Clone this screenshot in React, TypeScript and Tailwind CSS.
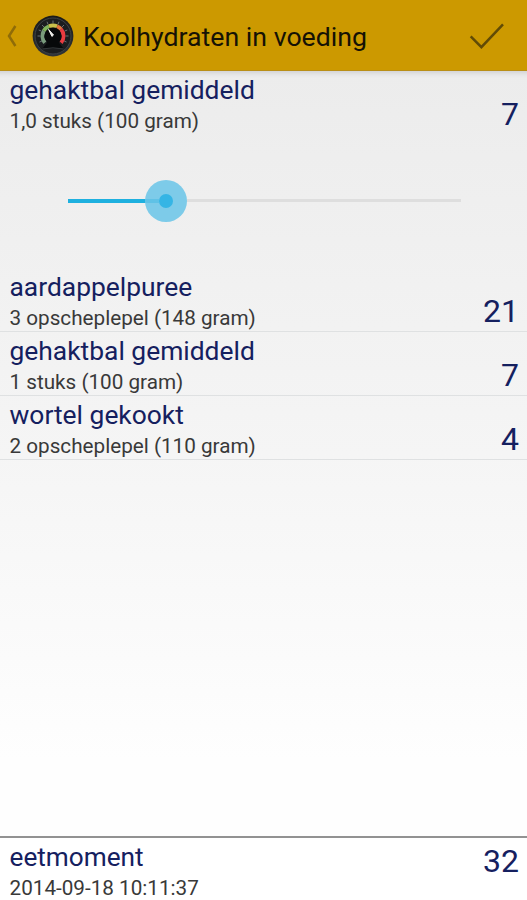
import React from "react";

interface FoodItem {
  name: string;
  portion: string;
  carbs: number;
}

const current: FoodItem = { name: "gehaktbal gemiddeld", portion: "1,0 stuks (100 gram)", carbs: 7 };

const items: FoodItem[] = [
  { name: "aardappelpuree", portion: "3 opscheplepel (148 gram)", carbs: 21 },
  { name: "gehaktbal gemiddeld", portion: "1 stuks (100 gram)", carbs: 7 },
  { name: "wortel gekookt", portion: "2 opscheplepel (110 gram)", carbs: 4 },
];

const GaugeIcon: React.FC = () => (
  <svg width="42" height="42" viewBox="0 0 42 42" className="shrink-0" aria-hidden="true">
    <defs>
      <linearGradient id="rim" x1="0" y1="0" x2="0" y2="1">
        <stop offset="0" stopColor="#1a1a18" />
        <stop offset="1" stopColor="#303438" />
      </linearGradient>
    </defs>
    <circle cx="21" cy="21" r="20.4" fill="url(#rim)" />
    <circle cx="21" cy="21" r="18" fill="#1b1d1f" stroke="#3d4246" strokeWidth="1" />
    {/* Scale ticks */}
    <path
      d="M5.5 21h3M33.5 21h3M21 5.5v3M10 10l2 2M32 10l-2 2M6.7 15l2.6 1M35.3 15l-2.6 1M15 6.7l1 2.6M27 6.7l-1 2.6M7.5 27l2.4-1M34.5 27l-2.4-1"
      stroke="#687073"
      strokeWidth="1"
    />
    {/* Dial */}
    <g fill="none" strokeWidth="4.2">
      <path d="M13 27.7A10.4 10.4 0 0 1 12 15.8" stroke="#799b7c" />
      <path d="M12 15.8A10.4 10.4 0 0 1 17 11.4" stroke="#7fb35c" />
      <path d="M17 11.4A10.4 10.4 0 0 1 25 11.4" stroke="#c9c04b" />
      <path d="M25 11.4A10.4 10.4 0 0 1 29 14.4" stroke="#e2733c" />
      <path d="M29 14.4A10.4 10.4 0 0 1 29 27.7" stroke="#e93b40" />
    </g>
    <path d="M21 12.6a8.6 8.6 0 0 1 5.8 14.9l4.5 5.7H10.7l4.5-5.7A8.6 8.6 0 0 1 21 12.6z" fill="#07090a" />
    <path d="M16.6 14.4l4.9 5.6-1.6 1.4z" fill="#f1f1ed" stroke="#f1f1ed" strokeWidth="1" />
    <path d="M10.5 34q10.5-2.4 21 0" fill="none" stroke="#34383a" strokeWidth="1" />
  </svg>
);

const Header: React.FC = () => (
  <header className="flex h-[71px] shrink-0 items-center border-b border-[#b98e16] bg-[#cc9900] pt-px">
    <svg width="32" height="24" viewBox="0 0 32 24" fill="none" className="shrink-0" aria-hidden="true">
      <path d="M15.4 2L9 12l6.4 10" stroke="#8f6c08" strokeWidth="2.5" />
    </svg>
    <GaugeIcon />
    <h1 className="ml-[9px] grow pt-[3px] text-[26.7px] leading-[30px] text-[#151205]">Koolhydraten in voeding</h1>
    <svg width="36" height="28" viewBox="0 0 36 28" fill="none" className="mr-[22px] shrink-0" aria-hidden="true">
      <path d="M1.7 14.3l10.7 10.8L34 2.4" stroke="#614b06" strokeWidth="2.5" />
    </svg>
  </header>
);

const FoodRow: React.FC<{ item: FoodItem; divided?: boolean }> = ({ item, divided }) => (
  <div
    className={`flex h-16 justify-between border-b pl-[9.5px] pr-2 ${
      divided ? "border-[#dfe1e2]" : "border-transparent"
    }`}
  >
    <div className="pt-0.5">
      <div className="text-[26.4px] leading-[34px] text-[#15205f]">{item.name}</div>
      <div className="text-[20.7px] leading-7 text-[#393939]">{item.portion}</div>
    </div>
    <div className="pt-[23px] text-[32px] leading-[40px] text-[#15205f]">{item.carbs}</div>
  </div>
);

const PortionSlider: React.FC = () => (
  <div className="flex h-[133px] items-center pb-0.5 pl-[68px] pr-[66px]">
    <div className="h-1 w-[77px] bg-[#1eb0df]" />
    <div className="flex size-[42px] items-center rounded-full bg-[#7dcbe9]">
      <div className="h-1 w-[14px] bg-[#60c2e6]" />
      <div className="size-[14px] rounded-full bg-[#35b5e5]" />
    </div>
    <div className="h-[3px] grow bg-[#dedede]" />
  </div>
);

export default function App() {
  return (
    <div className="flex h-[900px] w-full flex-col overflow-hidden bg-white font-['Roboto',sans-serif]">
      <Header />
      <main className="flex grow flex-col bg-linear-to-b from-[#ececec] via-[#f5f5f5] to-[#fefefe] to-90% shadow-[inset_0_8px_5px_-6px_#cfcfd1]">
        <FoodRow item={current} />
        <PortionSlider />
        {items.map((item) => (
          <FoodRow key={item.name} item={item} divided />
        ))}
      </main>
      <footer className="flex h-16 shrink-0 justify-between border-t-2 border-[#929292] bg-white pl-[9.5px] pr-2">
        <div className="pt-0.5">
          <div className="text-[26.2px] leading-[34px] text-[#15205f]">eetmoment</div>
          <div className="text-[20.7px] leading-7 text-[#393939]">2014-09-18 10:11:37</div>
        </div>
        <div className="pt-[3px] text-[32px] leading-[40px] text-[#15205f]">32</div>
      </footer>
    </div>
  );
}
